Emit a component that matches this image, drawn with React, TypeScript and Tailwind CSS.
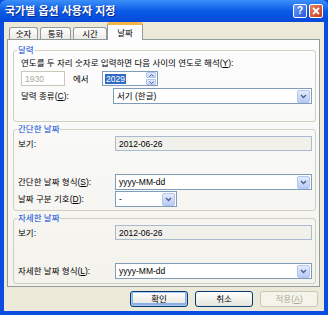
import type { ReactNode } from "react";

const font = "font-['Liberation_Sans','Noto_Sans_CJK_KR',sans-serif]";

function Arrow() {
	return (
		<div className="w-[13px] h-[13px] mr-px rounded-[2px] border border-[#b3c6f0] bg-gradient-to-b from-[#e3ebfe] to-[#b7cbf7] flex items-center justify-center">
			<svg width="7" height="5" viewBox="0 0 7 5">
				<path d="M1 1 L3.5 3.5 L6 1" stroke="#4d6185" strokeWidth="1.4" fill="none" />
			</svg>
		</div>
	);
}

function Select({ value, className = "" }: { value: string; className?: string }) {
	return (
		<div className={"h-full border border-[#7f9db9] bg-white flex items-center justify-between pl-[3px] " + className}>
			<span>{value}</span>
			<Arrow />
		</div>
	);
}

function ReadOnly({ value }: { value: string }) {
	return (
		<div className="h-full flex-1 border border-[#a9bccf] bg-[#f1f0eb] flex items-center pl-[3px]">
			{value}
		</div>
	);
}

function Group({ title, children, className = "" }: { title: string; children: ReactNode; className?: string }) {
	return (
		<fieldset className={"border border-[#d0d0bf] rounded-[3px] " + className}>
			<legend className="ml-[3px] px-px leading-[12px] text-[#0046d5]">{title}</legend>
			{children}
		</fieldset>
	);
}

function Tab({ label, active = false, className = "" }: { label: string; active?: boolean; className?: string }) {
	if (active) {
		return (
			<div
				className={
					"relative z-10 -mb-px h-[18px] border border-b-0 border-[#919b9c] border-t-[3px] border-t-[#f5b545] rounded-t-[3px] bg-[#fcfcfe] flex items-center justify-center " +
					className
				}
			>
				{label}
			</div>
		);
	}
	return (
		<div
			className={
				"h-[12px] border border-b-0 border-[#919b9c] rounded-t-[3px] bg-gradient-to-b from-white to-[#ecebe5] flex items-center justify-center " +
				className
			}
		>
			{label}
		</div>
	);
}

function Button({ label, kind = "normal" }: { label: ReactNode; kind?: "default" | "normal" | "disabled" }) {
	const look =
		kind === "disabled"
			? "border-[#c9c7ba] bg-[#f5f4ea] text-[#aca899]"
			: kind === "default"
			? "border-[#003c74] bg-gradient-to-b from-white to-[#e5e4dc] shadow-[inset_0_0_0_1px_#b0c9f3,inset_0_-1px_0_2px_#8eaee8] text-black"
			: "border-[#003c74] bg-gradient-to-b from-white to-[#e5e4dc] text-black";
	return (
		<div className={"w-[58px] h-[16px] border rounded-[3px] flex items-center justify-center " + look}>{label}</div>
	);
}

export default function App() {
	return (
		<div className={"w-[328px] h-[315px] bg-[#0a4be0] flex flex-col text-[8.5px] leading-[12px] text-black " + font}>
			{/* Title bar */}
			<div className="h-[22px] shrink-0 rounded-t-[6px] bg-gradient-to-b from-[#3d8ff9] via-[#0a5ae8] to-[#0749d8] flex items-center justify-between pl-[5px] pr-[5px]">
				<span className="text-[11px] font-bold text-white [text-shadow:1px_1px_0_#0a2a8a]">국가별 옵션 사용자 지정</span>
				<div className="flex gap-[2px]">
					<div className="w-[14px] h-[14px] rounded-[2px] border border-white bg-gradient-to-br from-[#6d9cf6] to-[#2857d6] flex items-center justify-center text-white text-[10px] font-bold leading-none">
						?
					</div>
					<div className="w-[14px] h-[14px] rounded-[2px] border border-white bg-gradient-to-br from-[#e7805d] to-[#c6391a] flex items-center justify-center">
						<svg width="8" height="8" viewBox="0 0 8 8">
							<path d="M1 1 L7 7 M7 1 L1 7" stroke="white" strokeWidth="1.8" />
						</svg>
					</div>
				</div>
			</div>

			{/* Body */}
			<div className="flex-1 mx-[4px] mb-[4px] bg-[#ece9d8] flex flex-col">
				<div className="h-[17px] flex items-end pl-[5px]">
					<Tab label="숫자" className="w-[29px]" />
					<Tab label="통화" className="w-[31px] ml-[2px]" />
					<Tab label="시간" className="w-[34px] ml-[2px]" />
					<Tab label="날짜" active className="w-[36px]" />
				</div>

				<div className="ml-[3px] mr-[4px] h-[248px] border border-[#919b9c] bg-gradient-to-b from-[#fdfdfe] to-[#f3f2ec] pl-[5px] pr-[3px] flex flex-col">
					<Group title="달력" className="mt-[4px]">
						<div className="pl-[7px] pr-[3px] pb-[17px]">
							<div className="mt-px h-[12px] whitespace-nowrap">
								연도를 두 자리 숫자로 입력하면 다음 사이의 연도로 해석(<u>Y</u>):
							</div>
							<div className="mt-[2px] h-[15px] flex items-center">
								<div className="w-[44px] h-full border border-[#c9c7ba] bg-white text-[#aca899] flex items-center pl-[3px]">
									1930
								</div>
								<span className="w-[37px] pl-[8px]">에서</span>
								<div className="w-[56px] h-full border border-[#7f9db9] bg-white flex items-center justify-between pl-[2px]">
									<span className="bg-[#316ac5] text-white px-px leading-[10px]">2029</span>
									<div className="w-[10px] h-[13px] mr-px flex flex-col gap-px">
										<div className="flex-1 rounded-[1px] border border-[#b3c6f0] bg-gradient-to-b from-[#e3ebfe] to-[#c3d4f8] flex items-center justify-center">
											<svg width="5" height="3" viewBox="0 0 5 3">
												<path d="M0.5 2.5 L2.5 0.5 L4.5 2.5" stroke="#4d6185" strokeWidth="1" fill="none" />
											</svg>
										</div>
										<div className="flex-1 rounded-[1px] border border-[#b3c6f0] bg-gradient-to-b from-[#e3ebfe] to-[#c3d4f8] flex items-center justify-center">
											<svg width="5" height="3" viewBox="0 0 5 3">
												<path d="M0.5 0.5 L2.5 2.5 L4.5 0.5" stroke="#4d6185" strokeWidth="1" fill="none" />
											</svg>
										</div>
									</div>
								</div>
							</div>
							<div className="mt-[2px] h-[16px] flex items-center">
								<span className="w-[92px]">
									달력 종류(<u>C</u>):
								</span>
								<Select value="서기 (한글)" className="flex-1" />
							</div>
						</div>
					</Group>

					<Group title="간단한 날짜" className="mt-px">
						<div className="pl-[4px] pr-[3px] pb-[3px]">
							<div className="mt-px h-[15px] flex items-center">
								<span className="w-[97px]">보기:</span>
								<ReadOnly value="2012-06-26" />
							</div>
							<div className="mt-[23px] h-[16px] flex items-center">
								<span className="w-[97px]">
									간단한 날짜 형식(<u>S</u>):
								</span>
								<Select value="yyyy-MM-dd" className="flex-1" />
							</div>
							<div className="mt-px h-[16px] flex items-center">
								<span className="w-[97px]">
									날짜 구분 기호(<u>D</u>):
								</span>
								<Select value="-" className="w-[62px]" />
							</div>
						</div>
					</Group>

					<Group title="자세한 날짜" className="mt-px">
						<div className="pl-[4px] pr-[3px] pb-[4px]">
							<div className="mt-px h-[15px] flex items-center">
								<span className="w-[97px]">보기:</span>
								<ReadOnly value="2012-06-26" />
							</div>
							<div className="mt-[23px] h-[16px] flex items-center">
								<span className="w-[97px]">
									자세한 날짜 형식(<u>L</u>):
								</span>
								<Select value="yyyy-MM-dd" className="flex-1" />
							</div>
						</div>
					</Group>
				</div>

				<div className="mt-[4px] flex justify-end gap-[7px] pr-[6px]">
					<Button label="확인" kind="default" />
					<Button label="취소" />
					<Button
						label={
							<span>
								적용(<u>A</u>)
							</span>
						}
						kind="disabled"
					/>
				</div>
			</div>
		</div>
	);
}
